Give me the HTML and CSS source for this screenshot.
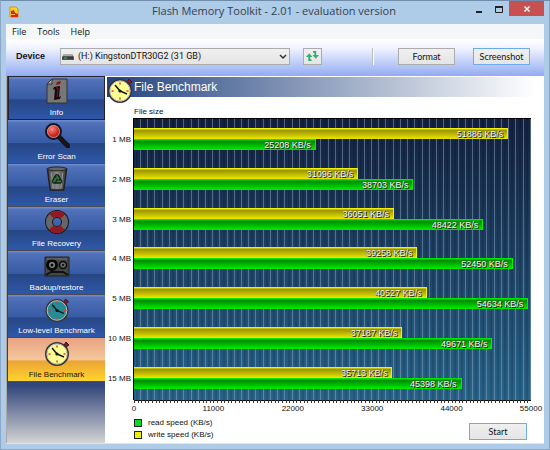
FILE: index.html
```html
<!DOCTYPE html>
<html lang="en">
<head>
<meta charset="utf-8">
<title>Flash Memory Toolkit</title>
<link rel="stylesheet" href="styles.css">
</head>
<body>
<svg class="defs" aria-hidden="true">
  <defs>
    <radialGradient id="lens" cx=".4" cy=".35"><stop offset="0" stop-color="#ff8a80"/><stop offset="1" stop-color="#c01812"/></radialGradient>
    <linearGradient id="metal" x2="1"><stop offset="0" stop-color="#444"/><stop offset=".5" stop-color="#8a8a8a"/><stop offset="1" stop-color="#333"/></linearGradient>
    <symbol id="clock" viewBox="0 0 26 26">
      <path d="M20 5l2-3 3 3-3 2z" fill="#8e1420" stroke="#4a1020"/>
      <circle cx="13" cy="14" r="11" fill="currentColor" stroke="#333" stroke-width="2"/>
      <circle cx="13" cy="14" r="10.200" fill="none" stroke="#c8c8c0" stroke-width="1"/>
      <path d="M13 5.500v2M13 20.500v2M4.500 14h2M19.500 14h2" stroke="#e33" stroke-width="1.500"/>
      <path d="M8 8l5 6 7 3" fill="none" stroke="#111" stroke-width="1.500"/>
      <circle cx="13" cy="14" r="1.600" fill="#111"/>
    </symbol>
  </defs>
</svg>
<header class="titlebar">
  <svg class="app-icon" viewBox="0 0 10 12"><path d="M1 1h6l2 2v8H1z" fill="#f5d51e" stroke="#d89312"/><path d="M2 5l3-1 1 3 3 1v3H2z" fill="#e02416"/><path d="M2 8h4v1H2z" fill="#ffb060"/></svg>
  <h1>Flash Memory Toolkit - 2.01 - evaluation version</h1>
  <div class="window-buttons">
    <button aria-label="Minimize"><svg viewBox="0 0 10 10"><path d="M2 8h6" stroke="#222" stroke-width="2"/></svg></button>
    <button aria-label="Maximize"><svg viewBox="0 0 10 10"><path d="M1.500 2.500h7v6h-7z" fill="none" stroke="#222"/><path d="M1 3h8" stroke="#222" stroke-width="2"/></svg></button>
    <button class="close" aria-label="Close"><svg viewBox="0 0 10 10"><path d="M2.500 2.500l5 5m0-5l-5 5" stroke="#fff" stroke-width="1.500"/></svg></button>
  </div>
</header>
<div class="client">
  <nav class="menu"><button>File</button><button>Tools</button><button>Help</button></nav>
  <div class="toolbar">
    <label for="device">Device</label>
    <div class="combo">
      <select id="device"><option>(H:) KingstonDTR30G2 (31 GB)</option></select>
      <svg class="drive" viewBox="0 0 12 8"><path d="M2 1h8l2 3v3H0V4z" fill="#555"/><path d="M2 1h8l1 2H1z" fill="#aaa"/><path d="M1 5h10" stroke="#222"/><path d="M2 5h3" stroke="#5b7"/></svg>
      <svg class="arrow" viewBox="0 0 8 6"><path d="M1 1l3 3 3-3" fill="none" stroke="#333" stroke-width="1.500"/></svg>
    </div>
    <button class="btn refresh" aria-label="Refresh"><svg viewBox="0 0 14 12"><path d="M3.500 6v4.500h2.500M10 6V1.500H7.500" fill="none" stroke="#35b06c" stroke-width="2"/><path d="M0 7l3.500-4L7 7zM7 5h7l-3.500 4z" fill="#35b06c"/></svg></button>
    <span class="divider"></span>
    <button class="btn">Format</button>
    <button class="btn focus">Screenshot</button>
  </div>
  <div class="body">
    <nav class="side">
      <button class="pressed"><svg viewBox="0 0 26 26"><path d="M8 1h15v24H3V6z" fill="#777" stroke="#333"/><path d="M8 1v5H3z" fill="#aaa" stroke="#333"/><path d="M13 4l4-1-1 3-4 1z" fill="#8c1218"/><path d="M10 9l6-1-1 11 2-1-1 3-6 1 1-11-2 1z" fill="#16090c"/><path d="M12 10l2 0-1 9" fill="none" stroke="#8c1218"/></svg>Info</button>
      <button><svg viewBox="0 0 26 26"><path d="M15 15l9 9" stroke="#1a1418" stroke-width="5" stroke-linecap="round"/><circle cx="9.500" cy="9.500" r="7.500" fill="url(#lens)" stroke="#161620" stroke-width="2"/><circle cx="9.500" cy="9.500" r="6" fill="none" stroke="#d9a0a0" stroke-width=".8"/></svg>Error Scan</button>
      <button><svg viewBox="0 0 26 26"><path d="M3 3h20l-3 22H6z" fill="url(#metal)" stroke="#222" stroke-width="1.500"/><ellipse cx="13" cy="3" rx="10" ry="2" fill="#666" stroke="#222"/><path d="M7 7l2 16M19 7l-2 16" stroke="#aaa" stroke-width=".8"/><path d="M10 16l3-5 3 5z" fill="#181818" stroke="#182018" stroke-width="5" stroke-linejoin="round"/><path d="M10 16l3-5 3 5z" fill="none" stroke="#26833a" stroke-width="2" stroke-dasharray="4 1.500"/></svg>Eraser</button>
      <button><svg viewBox="0 0 26 26"><circle cx="13" cy="13" r="8" fill="none" stroke="#16161c" stroke-width="8"/><circle cx="13" cy="13" r="8" fill="none" stroke="#666" stroke-width="6"/><circle cx="13" cy="13" r="8" fill="none" stroke="#931820" stroke-width="6" stroke-dasharray="12.560 12.560" stroke-dashoffset="-6.280"/></svg>File Recovery</button>
      <button><svg viewBox="0 0 26 26"><path d="M1 4h24v19H1z" fill="#454545" stroke="#222"/><circle cx="8" cy="12" r="4.500" fill="#888" stroke="#080808" stroke-width="3"/><circle cx="19" cy="12" r="3.500" fill="#666" stroke="#080808" stroke-width="1.500"/><circle cx="8" cy="12" r="1.500"/><circle cx="19" cy="12" r="1"/><path d="M2 22l5-3h12l5 3" fill="none" stroke="#111" stroke-width="2"/><path d="M3 6h20" stroke="#777"/></svg>Backup/restore</button>
      <button class="teal"><svg><use href="#clock"/></svg>Low-level Benchmark</button>
      <button class="active"><svg><use href="#clock"/></svg>File Benchmark</button>
    </nav>
    <main>
      <div class="heading"><svg><use href="#clock"/></svg><h2>File Benchmark</h2></div>
      <p class="caption">File size</p>
      <div class="chart">
        <div class="sizes"><span>1 MB</span><span>2 MB</span><span>3 MB</span><span>4 MB</span><span>5 MB</span><span>10 MB</span><span>15 MB</span></div>
        <div class="plot">
          <div class="pair"><div class="bar write" style="width:94.300%">51886 KB/s</div><div class="bar read" style="width:45.800%">25208 KB/s</div></div>
          <div class="pair"><div class="bar write" style="width:56.500%">31096 KB/s</div><div class="bar read" style="width:70.400%">38703 KB/s</div></div>
          <div class="pair"><div class="bar write" style="width:65.500%">36051 KB/s</div><div class="bar read" style="width:88%">48422 KB/s</div></div>
          <div class="pair"><div class="bar write" style="width:71.400%">39258 KB/s</div><div class="bar read" style="width:95.400%">52450 KB/s</div></div>
          <div class="pair"><div class="bar write" style="width:73.700%">40527 KB/s</div><div class="bar read" style="width:99.300%">54634 KB/s</div></div>
          <div class="pair"><div class="bar write" style="width:67.600%">37187 KB/s</div><div class="bar read" style="width:90.300%">49671 KB/s</div></div>
          <div class="pair"><div class="bar write" style="width:65.100%">35713 KB/s</div><div class="bar read" style="width:82.500%">45398 KB/s</div></div>
        </div>
        <div class="axis"><span>0</span><span>11000</span><span>22000</span><span>33000</span><span>44000</span><span>55000</span></div>
      </div>
      <footer>
        <ul class="legend"><li class="r">read speed (KB/s)</li><li class="w">write speed (KB/s)</li></ul>
        <button class="btn focus">Start</button>
      </footer>
    </main>
  </div>
</div>
</body>
</html>
```
FILE: styles.css
```css
* { box-sizing: border-box; }
body {
  margin: 0;
  min-height: 100vh;
  padding: 0 5px 5px;
  display: flex;
  flex-direction: column;
  background: #aecbe8;
  border: 1px solid #8ba9c6;
  border-top-color: #6f8dab;
  font: 8px/12px "Liberation Sans", Arial, sans-serif;
  color: #111;
}
button, select { font: inherit; color: inherit; margin: 0; padding: 0; border: 0; background: none; }
svg { display: block; }
.defs { position: absolute; width: 0; height: 0; }

.titlebar { display: flex; height: 23px; padding-left: 3px; }
.app-icon { width: 10px; height: 12px; margin-top: 5px; }
.titlebar h1 {
  flex: 1;
  margin: 0;
  padding-left: 60px;
  text-align: center;
  font: 11px/19px "Open Sans", "Noto Sans", sans-serif;
  color: #33414f;
}
.window-buttons { display: flex; }
.window-buttons button { width: 20px; height: 15px; display: flex; align-items: center; justify-content: center; }
.window-buttons svg { width: 10px; height: 10px; }
.window-buttons .close { width: 35px; background: #c75050; }

.client { flex: 1; display: flex; flex-direction: column; background: #fff; border-bottom: 1px solid #dde6ef; }
.menu { display: flex; gap: 11px; height: 15px; padding-left: 6px; background: #f5f6f7; font: 9px/15px "Open Sans", "Noto Sans", sans-serif; }
.toolbar {
  display: flex;
  align-items: center;
  height: 37px;
  padding: 0 14px 3px 10px;
  background: linear-gradient(#fff, #f0f3fe 25%, #92abf2);
}
.toolbar label { width: 44px; font: bold 9px/17px "Liberation Sans", Arial, sans-serif; }
.combo { position: relative; flex: 1; height: 17px; }
.combo select { appearance: none; width: 100%; height: 17px; padding-left: 17px; background: linear-gradient(#f0f0f0, #e4e4e4); border: 1px solid #acacac; font: 9px/15px Roboto, sans-serif; }
.drive { position: absolute; left: 2px; top: 5px; width: 12px; height: 8px; }
.arrow { position: absolute; right: 3px; top: 6px; width: 8px; height: 6px; }
.btn { width: 57px; height: 17px; background: linear-gradient(#f0f0f0, #e5e5e5); border: 1px solid #acacac; font: 9px/15px Lato, sans-serif; }
.btn.focus { border-color: #6cacea; }
.btn.refresh { width: 19px; margin-left: 13px; padding: 1px 2px; }
.refresh svg { width: 13px; height: 12px; }
.divider { width: 2px; height: 17px; margin: 0 24px 0 50px; background: #bbb; border-right: 1px solid #fff; }
.toolbar .btn.focus { margin-left: 18px; }

.body { flex: 1; display: flex; }
.side { width: 99px; display: flex; flex-direction: column; padding-left: 1px; margin-right: 1px; border-left: 1px solid #aaa; background: linear-gradient(#263f7d 300px, #33477c 310px, #d4d4d6); }
.side button {
  height: 44px;
  display: flex;
  flex-direction: column;
  align-items: center;
  padding-top: 2px;
  color: #fff;
  background: linear-gradient(#7290d2, #5272ba 6%, #365aa4 53%, #274684 54%, #2e58a8);
  border-bottom: 1px solid #4a4a54;
}
.side button:nth-child(3n) { height: 43px; }
.side svg { width: 26px; height: 26px; margin-bottom: 3px; }
.side .pressed { border: 1px solid #223; padding-top: 1px; }
.side .teal svg { color: #238c94; }
.side .active { color: #221804; background: linear-gradient(#e7a382, #f4c79b 50%, #eba436 54%, #ffd42c); }
.active svg, .heading svg { color: #ffff91; }

main { flex: 1; display: flex; flex-direction: column; padding: 1px 0 0 1px; }
.heading { position: relative; height: 20px; padding-left: 27px; background: linear-gradient(90deg, #24447f, #fff 98%); }
.heading svg { position: absolute; left: 0; top: 0; width: 26px; height: 26px; }
.heading h2 { margin: 0; font: 12px/20px "Liberation Sans", Arial, sans-serif; color: #fff; }
.caption { margin: 9px 0 0 27px; line-height: 12px; }
.chart { flex: 1; display: grid; grid-template-columns: 24px 1fr; grid-template-rows: 1fr 15px; column-gap: 3px; padding-right: 13px; }
.sizes { display: grid; grid-auto-rows: 1fr; align-items: center; justify-items: end; padding: 2px 0 1px; white-space: nowrap; }
.plot {
  display: grid;
  grid-auto-rows: 1fr;
  align-items: center;
  padding: 0 0 2px;
  border-top: 1px solid #000;
  box-shadow: -1px 0 #000, 0 1px #111;
  background:
    repeating-linear-gradient(90deg, transparent 0 6px, #9bb5cc70 6px 7px, transparent 7px calc(100% / 55)),
    repeating-linear-gradient(90deg, transparent 0 2px, #0002 2px 4px, transparent 4px calc(100% / 55)),
    linear-gradient(#14213f, #28638a);
}
.bar { height: 11px; padding-right: 4px; text-align: right; font-size: 9px; line-height: 12px; color: #fff; text-shadow: 1px 1px #222, 0 0 1px #222; }
.write { background: linear-gradient(#f2f200 1px, #969000 2px, #eee800); border-right: 1px solid #f2f200; }
.read { background: linear-gradient(#00e800 1px, #008600 2px, #00ee00); border-right: 1px solid #00f000; }
.axis {
  grid-column: 2;
  display: flex;
  justify-content: space-between;
  padding-top: 3px;
  background: repeating-linear-gradient(90deg, #333 0 1px, transparent 1px calc(100% / 110)) 0 0 / 100% 3px no-repeat;
}
.axis span { width: 0; display: flex; justify-content: center; }
footer { display: flex; justify-content: space-between; padding: 2px 17px 2px 27px; }
.legend { margin: 0; padding: 0; list-style: none; }
.legend li { display: flex; align-items: center; gap: 6px; }
.legend li::before { content: ""; width: 6px; height: 6px; border: 1px solid #222; }
.legend .r::before { background: #0d2; }
.legend .w::before { background: #ee0; }
footer .btn { margin-top: 6px; width: 58px; }
```
